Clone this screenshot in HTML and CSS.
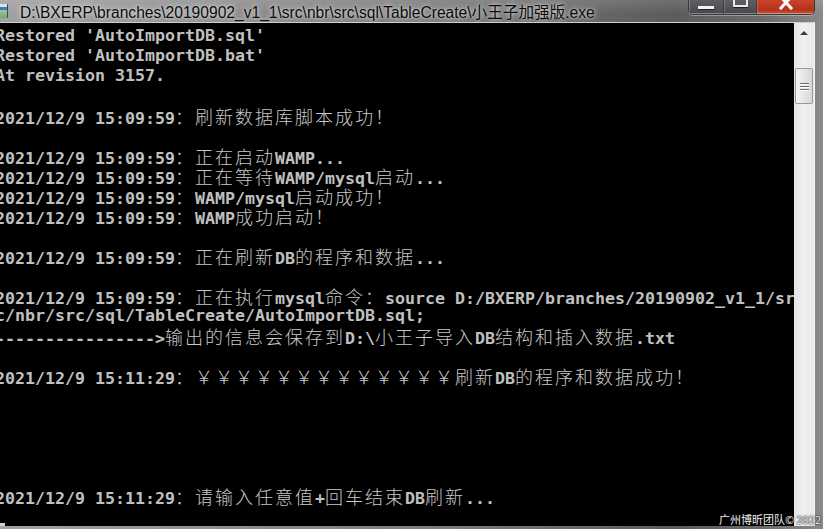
FILE: index.html
```html
<!DOCTYPE html>
<html lang="zh-CN">

<head>
    <meta charset="UTF-8">
    <meta name="viewport" content="width=device-width, initial-scale=1.0">
    <title>小王子加强版</title>
    <link rel="stylesheet" href="styles.css">
</head>

<body>
    <div class="window">
        <div class="titlebar">
            <div class="app-icon"></div>
            <div class="title">D:\BXERP\branches\20190902_v1_1\src\nbr\src\sql\TableCreate\小王子加强版.exe</div>
            <div class="buttons">
                <div class="btn btn-min"><span class="min-glyph"></span></div>
                <div class="btn btn-max"><span class="max-glyph"></span></div>
                <div class="btn btn-close">
                    <svg width="14" height="10" viewBox="0 0 14 10">
                        <path d="M2 -3 L12 8 M12 -3 L2 8" stroke="#fff" stroke-width="3" stroke-linecap="square" fill="none" />
                    </svg>
                </div>
            </div>
        </div>

        <div class="client">
            <div class="console">
                <div class="line">Restored 'AutoImportDB.sql'</div>
                <div class="line">Restored 'AutoImportDB.bat'</div>
                <div class="line">At revision 3157.</div>
                <div class="line"></div>
                <div class="line">2021/12/9 15:09:59<span class="c">：刷新数据库脚本成功！</span></div>
                <div class="line"></div>
                <div class="line">2021/12/9 15:09:59<span class="c">：正在启动</span>WAMP...</div>
                <div class="line">2021/12/9 15:09:59<span class="c">：正在等待</span>WAMP/mysql<span class="c">启动</span>...</div>
                <div class="line">2021/12/9 15:09:59<span class="c">：</span>WAMP/mysql<span class="c">启动成功！</span></div>
                <div class="line">2021/12/9 15:09:59<span class="c">：</span>WAMP<span class="c">成功启动！</span></div>
                <div class="line"></div>
                <div class="line">2021/12/9 15:09:59<span class="c">：正在刷新</span>DB<span class="c">的程序和数据</span>...</div>
                <div class="line"></div>
                <div class="line">2021/12/9 15:09:59<span class="c">：正在执行</span>mysql<span class="c">命令：</span>source D:/BXERP/branches/20190902_v1_1/sr</div>
                <div class="line">c/nbr/src/sql/TableCreate/AutoImportDB.sql;</div>
                <div class="line">----------------&gt;<span class="c">输出的信息会保存到</span>D:\<span class="c">小王子导入</span>DB<span class="c">结构和插入数据</span>.txt</div>
                <div class="line"></div>
                <div class="line">2021/12/9 15:11:29<span class="c">：￥￥￥￥￥￥￥￥￥￥￥￥￥刷新</span>DB<span class="c">的程序和数据成功！</span></div>
                <div class="line"></div>
                <div class="line"></div>
                <div class="line"></div>
                <div class="line"></div>
                <div class="line"></div>
                <div class="line">2021/12/9 15:11:29<span class="c">：请输入任意值</span>+<span class="c">回车结束</span>DB<span class="c">刷新</span>...</div>
                <div class="line"><span class="cursor"></span></div>
            </div>

            <div class="scrollbar">
                <div class="arrow-up"></div>
                <div class="thumb">
                    <span></span>
                    <span></span>
                    <span></span>
                </div>
            </div>
        </div>

        <div class="watermark">广州博昕团队© 2022</div>
    </div>
</body>

</html>
```

FILE: styles.css
```css
* {
    margin: 0;
    padding: 0;
    box-sizing: border-box;
}

html,
body {
    width: 100%;
    height: 100%;
    overflow: hidden;
    background: #6d6d6d;
}

.window {
    position: relative;
    width: 823px;
    height: 529px;
    display: flex;
    flex-direction: column;
    background: linear-gradient(to right, #a2a2a2 0%, #8c8c8c 30%, #7a7a7a 55%, #5c5c5c 82%, #6a6a6a 92%, #8a8a8a 100%);
}

/* title bar */
.titlebar {
    height: 26px;
    display: flex;
    align-items: flex-start;
    background: linear-gradient(to bottom, rgba(255, 255, 255, 0.12), rgba(255, 255, 255, 0) 60%);
}

.app-icon {
    width: 8px;
    height: 14px;
    margin-top: 4px;
    background: linear-gradient(to bottom, #d8e4ea 0%, #d8e4ea 20%, #3f7fb0 20%, #3f7fb0 40%, #9fc9a0 40%, #6ea96f 100%);
    border-right: 1px solid #3d4d5a;
}

.title {
    margin-left: 12px;
    margin-top: 4px;
    font-family: "Liberation Sans", "Noto Sans CJK SC", sans-serif;
    font-size: 15.6px;
    line-height: 18px;
    color: #0b0b0b;
    white-space: nowrap;
    text-shadow: 0 0 6px rgba(255, 255, 255, 0.75), 0 0 3px rgba(255, 255, 255, 0.6);
}

.buttons {
    margin-left: auto;
    margin-right: 8px;
    display: flex;
    height: 15px;
    border: 1px solid #3a3a3a;
    border-top: none;
    border-radius: 0 0 5px 5px;
    overflow: hidden;
    box-shadow: 0 1px 0 rgba(255, 255, 255, 0.35);
}

.btn {
    height: 100%;
    display: flex;
    justify-content: center;
    box-shadow: inset 0 -1px 0 rgba(255, 255, 255, 0.35), inset 1px 0 0 rgba(255, 255, 255, 0.2);
}

.btn-min {
    width: 35px;
    align-items: flex-start;
    background: linear-gradient(to bottom, #5f6063, #47484b);
    border-right: 1px solid #3a3a3a;
}

.btn-max {
    width: 33px;
    align-items: flex-start;
    background: linear-gradient(to bottom, #5f6063, #47484b);
    border-right: 1px solid #3a3a3a;
}

.btn-close {
    width: 57px;
    align-items: flex-start;
    background: linear-gradient(to bottom, #c9452c, #b2321b 70%, #c25a45);
}

.min-glyph {
    width: 16px;
    height: 3px;
    margin-top: 6px;
    background: #f2f2f2;
    box-shadow: 0 1px 1px rgba(0, 0, 0, 0.6);
}

.max-glyph {
    width: 15px;
    height: 7px;
    border: 2px solid #e8e8e8;
    border-top: none;
    box-shadow: 0 1px 1px rgba(0, 0, 0, 0.6);
}

/* console area */
.client {
    flex: 1;
    display: flex;
    width: 815px;
    margin-bottom: 3px;
    border-top: 1px solid #cfcfcf;
    border-right: 1px solid #f4f4f4;
}

.console {
    width: 794px;
    height: 100%;
    background: #000;
    overflow: hidden;
    padding-top: 3px;
    color: #c0c0c0;
    font-family: "DejaVu Sans Mono", "Noto Sans CJK SC", monospace;
    font-size: 16.61px;
    font-weight: bold;
}

.line {
    height: 20px;
    line-height: 20px;
    margin-left: -5px;
    white-space: pre;
}

.c {
    font-family: "Noto Sans CJK SC", sans-serif;
    font-size: 18px;
    font-weight: 300;
    letter-spacing: 2px;
    color: #c8c8c8;
}

.cursor {
    display: inline-block;
    width: 10px;
    height: 4px;
    vertical-align: -6px;
    background: #d0d0d0;
}

/* scrollbar */
.scrollbar {
    width: 20px;
    height: 100%;
    padding-top: 8px;
    display: flex;
    flex-direction: column;
    align-items: center;
    background: linear-gradient(to right, #e6e6e6, #f0f0f0 50%, #e8e8e8);
}

.arrow-up {
    width: 0;
    height: 0;
    border-left: 4px solid transparent;
    border-right: 4px solid transparent;
    border-bottom: 4px solid #3c3c3c;
}

.thumb {
    width: 18px;
    height: 36px;
    margin-top: 33px;
    border: 1px solid #979797;
    border-radius: 2px;
    background: linear-gradient(to right, #f4f4f4, #e6e6e6 50%, #d6d6d6);
    display: flex;
    flex-direction: column;
    align-items: center;
    justify-content: center;
    gap: 2px;
}

.thumb span {
    width: 9px;
    height: 1px;
    background: #6e6e6e;
    box-shadow: 0 1px 0 #fff;
}

.watermark {
    position: absolute;
    right: 2px;
    bottom: 3px;
    font-family: "Noto Sans CJK SC", sans-serif;
    font-size: 11px;
    line-height: 13px;
    color: #f4f4f4;
    text-shadow: 0 0 2px #000, 0 0 1px #000;
}
```
